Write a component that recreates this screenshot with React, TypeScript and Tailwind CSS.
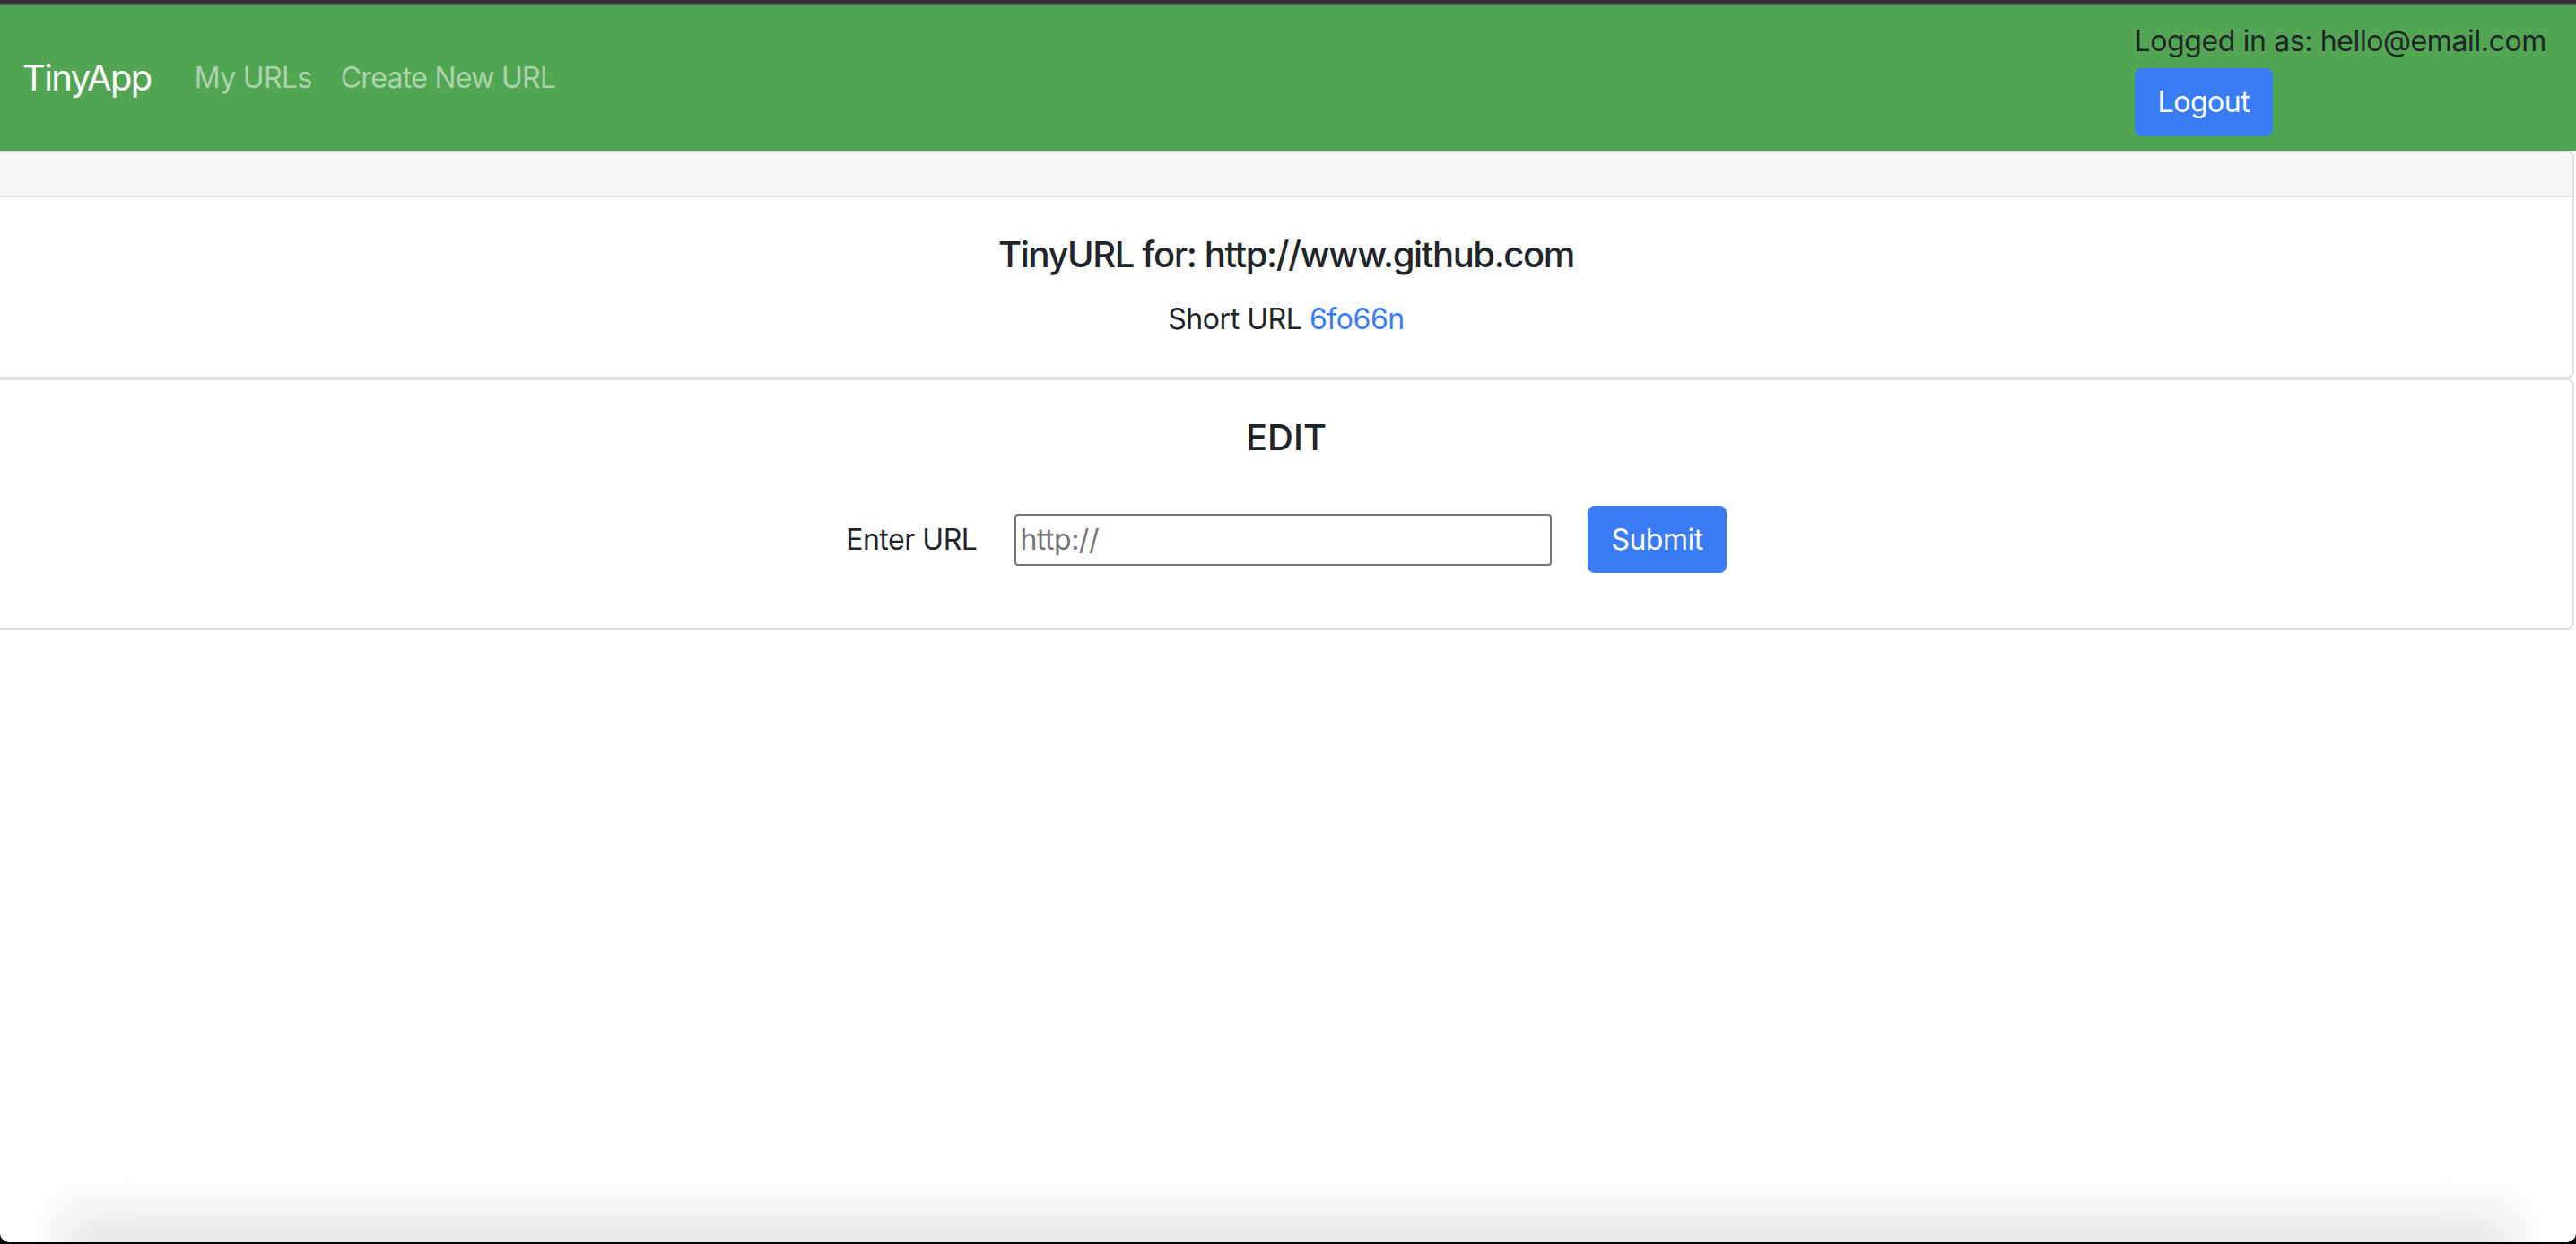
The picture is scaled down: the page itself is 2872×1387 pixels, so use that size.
import React from "react";

export default function App() {
  return (
    <div className="w-[2872px] h-[1387px] bg-black flex flex-col font-['Inter','Liberation_Sans',sans-serif] text-[#212529]">
      <div className="flex-1 flex flex-col bg-white rounded-b-[10px] overflow-hidden">
        <div className="h-[4px] bg-[#323236]" />
        <div className="h-[2px] bg-[#56565a]" />
        <nav className="h-[162px] bg-[#52a552] flex items-center justify-between pl-[25px] pr-[33px]">
          <div className="flex items-center">
            <span className="text-[40px] leading-[60px] tracking-[-0.04em] text-white mr-[32px]">TinyApp</span>
            <a className="text-[32px] leading-[48px] tracking-[-0.02em] text-[#abd4ab] px-[16px]">My URLs</a>
            <a className="text-[32px] leading-[48px] tracking-[-0.022em] text-[#abd4ab] px-[16px]">Create New URL</a>
          </div>
          <div className="self-stretch flex flex-col items-start pt-[16px]">
            <span className="text-[32px] leading-[48px] tracking-[-0.012em]">Logged in as: hello@email.com</span>
            <button className="mt-[6px] h-[76px] px-[26px] rounded-[8px] bg-[#3a7cf6] text-white text-[32px] leading-[48px] tracking-[-0.015em]">
              Logout
            </button>
          </div>
        </nav>
        <div className="mr-[2px] border-2 border-l-0 border-[#dedede] rounded-r-[8px] overflow-hidden">
          <div className="h-[48px] bg-[#f7f7f7] border-b-2 border-[#dedede] box-content" />
          <div className="h-[200px] flex flex-col items-center pt-[40px]">
            <h5 className="text-[40px] leading-[48px] font-medium tracking-[-0.035em]">TinyURL for: http://www.github.com</h5>
            <p className="mt-[24px] text-[32px] leading-[48px] tracking-[-0.014em]">
              Short URL <a className="text-[#3a7cf6]">6fo66n</a>
            </p>
          </div>
        </div>
        <div className="mr-[2px] border-2 border-l-0 border-[#dedede] rounded-r-[8px]">
          <div className="h-[276px] flex flex-col items-center pt-[40px]">
            <h3 className="text-[40px] leading-[48px] font-medium">EDIT</h3>
            <div className="mt-[52px] flex items-center">
              <label className="text-[32px] leading-[48px] tracking-[-0.015em]">Enter URL</label>
              <input
                className="ml-[42px] w-[599px] h-[58px] border-2 border-[#767676] rounded-[4px] px-[4px] text-[32px] tracking-[-0.015em] placeholder:text-[#757575] outline-none"
                placeholder="http://"
              />
              <button className="ml-[40px] h-[75px] px-[26px] rounded-[8px] bg-[#3a7cf6] text-white text-[32px] leading-[48px] tracking-[-0.015em]">
                Submit
              </button>
            </div>
          </div>
        </div>
        <div className="flex-1" />
        <div className="relative h-[80px] overflow-hidden">
          <div className="absolute left-[60px] right-[60px] top-[20px] bottom-[-30px] bg-linear-to-b from-white to-[#d8d8d8] blur-[24px] rounded-[40px]" />
        </div>
      </div>
      <div className="h-[2px]" />
    </div>
  );
}
